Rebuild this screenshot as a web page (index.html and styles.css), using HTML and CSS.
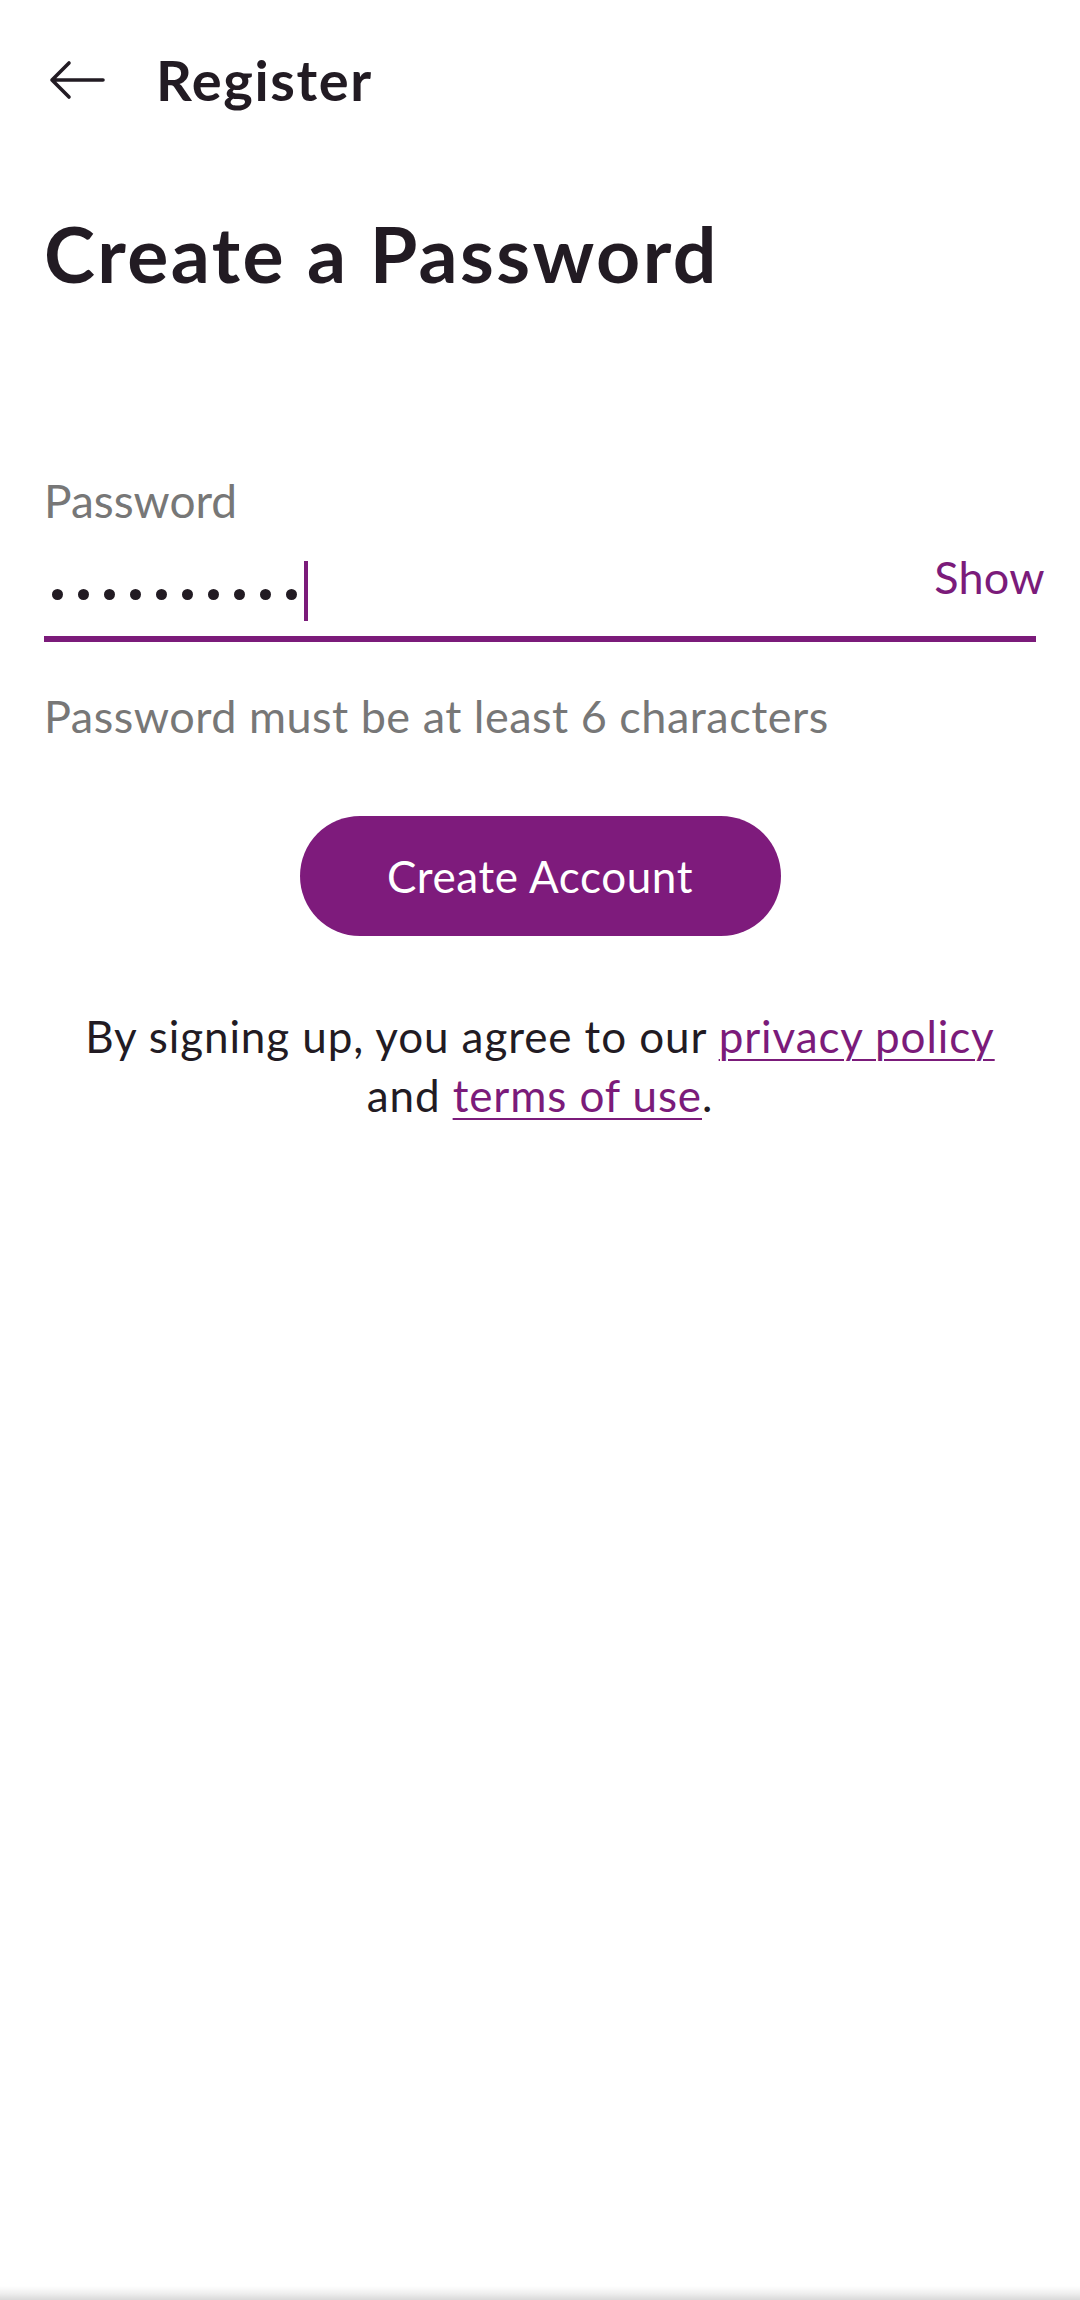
FILE: index.html
```html
<!DOCTYPE html>
<html lang="en">
<head>
<meta charset="utf-8">
<title>Register</title>
<link rel="stylesheet" href="styles.css">
</head>
<body>
<div class="screen">
  <header class="header">
    <svg class="back" width="56" height="40" viewBox="0 0 56 40" aria-hidden="true">
      <path d="M3 20 H54 M3 20 L20 3 M3 20 L20 37" fill="none" stroke="#221b23" stroke-width="3.6" stroke-linecap="round" stroke-linejoin="round"/>
    </svg>
    <span class="header-title">Register</span>
  </header>

  <main class="content">
    <h1 class="title">Create a Password</h1>

    <div class="field">
      <div class="field-label">Password</div>
      <div class="input-row">
        <div class="value">
          <span class="dot"></span><span class="dot"></span><span class="dot"></span><span class="dot"></span><span class="dot"></span><span class="dot"></span><span class="dot"></span><span class="dot"></span><span class="dot"></span><span class="dot"></span>
          <span class="cursor"></span>
        </div>
        <span class="show">Show</span>
      </div>
      <div class="underline"></div>
    </div>

    <p class="helper">Password must be at least 6 characters</p>

    <div class="actions">
      <button class="primary" type="button">Create Account</button>
    </div>

    <p class="terms">By signing up, you agree to our <a href="#" class="link">privacy policy</a><br>and <a href="#" class="link">terms of use</a>.</p>
  </main>

  <div class="nav-shadow"></div>
</div>
</body>
</html>
```

FILE: styles.css
```css
* { box-sizing: border-box; }

html, body {
  margin: 0;
  padding: 0;
  background: #ffffff;
}

body {
  font-family: "Lato", "Noto Sans", sans-serif;
  color: #221b23;
}

.screen {
  min-height: 2300px;
  display: flex;
  flex-direction: column;
}

.header {
  display: flex;
  align-items: center;
  padding: 46px 0 0 49px;
  gap: 51px;
}

.back {
  display: block;
  margin-bottom: 0;
}

.header-title {
  font-size: 56px;
  line-height: 68px;
  font-weight: 700;
  letter-spacing: 1.6px;
  color: #221b23;
}

.content {
  flex: 1;
  padding: 0 44px;
}

.title {
  margin: 93px 0 0;
  font-size: 77px;
  line-height: 92px;
  font-weight: 700;
  letter-spacing: 2.4px;
  color: #221b23;
}

.field {
  margin-top: 174px;
}

.field-label {
  font-size: 46px;
  line-height: 55px;
  color: #777777;
}

.input-row {
  display: flex;
  align-items: flex-end;
  justify-content: space-between;
  height: 108px;
  margin-right: -9px;
}

.value {
  display: flex;
  align-items: center;
  height: 60px;
  margin: 0 0 15px 8px;
}

.dot {
  width: 11px;
  height: 11px;
  border-radius: 50%;
  background: #221b23;
  margin-right: 15px;
  margin-top: 6px;
}

.dot:nth-child(10) {
  margin-right: 7px;
}

.cursor {
  width: 4px;
  height: 60px;
  background: #7b1b7a;
}

.show {
  font-size: 45px;
  line-height: 55px;
  color: #7b1b7a;
  letter-spacing: 0.3px;
  padding-bottom: 31px;
}

.underline {
  height: 6px;
  background: #7b1b7a;
}

.helper {
  margin: 48px 0 0;
  font-size: 45px;
  line-height: 53px;
  letter-spacing: 0.5px;
  color: #777777;
}

.actions {
  display: flex;
  justify-content: center;
  margin-top: 73px;
}

.primary {
  width: 481px;
  height: 120px;
  border: none;
  border-radius: 60px;
  background: #7e1b7c;
  color: #ffffff;
  font-family: "Lato", "Noto Sans", sans-serif;
  font-size: 44px;
  font-weight: 400;
  letter-spacing: 0.6px;
  padding: 0;
}

.terms {
  margin: 71px 0 0;
  text-align: center;
  font-size: 44px;
  line-height: 59px;
  letter-spacing: 0.9px;
  color: #221b23;
}

.link {
  color: #7b1b7a;
  text-decoration: underline;
  text-decoration-thickness: 2px;
  text-underline-offset: 6px;
}

.nav-shadow {
  height: 14px;
  background: linear-gradient(to bottom, rgba(0,0,0,0) 0%, rgba(0,0,0,0.06) 50%, rgba(0,0,0,0.15) 100%);
}
```
